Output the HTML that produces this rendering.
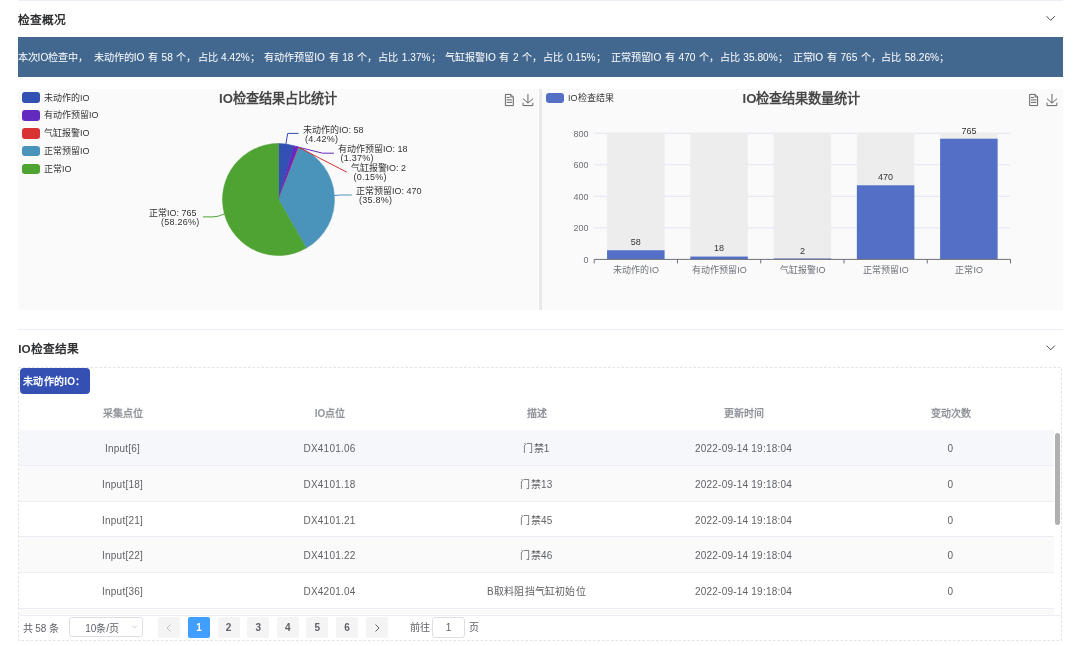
<!DOCTYPE html>
<html lang="zh-CN"><head><meta charset="utf-8">
<style>
*{margin:0;padding:0;box-sizing:border-box}
html,body{width:1080px;height:646px;overflow:hidden;background:#fff;font-family:"Liberation Sans",sans-serif;color:#303133}
.a{position:absolute;white-space:nowrap}
.hline{position:absolute;height:1px;background:#ebeef5}
.title{position:absolute;font-size:11.7px;font-weight:bold;color:#303133;line-height:14px;white-space:nowrap}
.chev{position:absolute;width:7px;height:7px;border-right:1px solid #555;border-bottom:1px solid #555;transform:rotate(45deg)}
.banner{position:absolute;left:18px;top:37px;width:1045px;height:40px;background:#436890}
.bt{position:absolute;top:1.2px;color:#fff;font-size:10.15px;word-spacing:0.8px;text-spacing-trim:space-all;line-height:40px;white-space:nowrap}
.panel{position:absolute;top:89px;height:221px;background:#fafafa}
.lg{position:absolute;width:18px;height:10.5px;border-radius:3px}
.lt{position:absolute;font-size:9px;color:#333;line-height:10px;white-space:nowrap}
.ct{position:absolute;font-size:13.2px;font-weight:bold;color:#464646;white-space:nowrap;line-height:16px}
.pl{position:absolute;font-size:9px;color:#333;line-height:9px;white-space:nowrap}
.yl{position:absolute;font-size:9px;color:#6e7079;line-height:10px;text-align:right;width:30px}
.xl{position:absolute;font-size:9px;color:#6e7079;line-height:10px;text-align:center;width:84px;white-space:nowrap}
.bl{position:absolute;font-size:9px;color:#333;line-height:10px;text-align:center;width:58px}
.th{position:absolute;top:405.5px;height:16px;line-height:16px;font-size:10px;color:#909399;text-align:center;width:207px;font-weight:bold;white-space:nowrap}
.row{position:absolute;left:0;width:1035px;height:35.68px;border-bottom:1px solid #ebeef5}
.td{position:absolute;top:1px;letter-spacing:0.22px;height:35px;line-height:35px;font-size:10px;color:#606266;text-align:center;width:207px;white-space:nowrap}
.pb{position:absolute;top:617.3px;width:22px;height:20.3px;background:#f4f4f5;border-radius:2px;font-size:10px;font-weight:bold;color:#606266;text-align:center;line-height:21.5px}
</style></head><body><div style="position:absolute;left:0;top:0;width:1080px;height:646px;will-change:transform">
<div class="hline" style="left:18px;top:0;width:1045px"></div>
<div class="title" style="left:18.2px;top:12.8px">检查概况</div>
<svg class="a" style="left:1040px;top:10px" width="20" height="16"><path d="M6.5,6.2 L10.7,10.4 L14.9,6.2" fill="none" stroke="#4a4a4a" stroke-width="1"/></svg>
<div class="banner"><span class="bt" style="left:-0.4px">本次IO检查中，</span><span class="bt" style="left:75.7px">未动作的IO 有 58 个，</span><span class="bt" style="left:179.5px">占比 4.42%；</span><span class="bt" style="left:246.3px">有动作预留IO 有 18 个，</span><span class="bt" style="left:360.2px">占比 1.37%；</span><span class="bt" style="left:427.2px">气缸报警IO 有 2 个，</span><span class="bt" style="left:525.3px">占比 0.15%；</span><span class="bt" style="left:592.6px">正常预留IO 有 470 个，</span><span class="bt" style="left:701.7px">占比 35.80%；</span><span class="bt" style="left:774.5px">正常IO 有 765 个，</span><span class="bt" style="left:863.1px">占比 58.26%；</span></div>

<div class="panel" style="left:18px;width:520px"></div>
<div class="a" style="left:538.5px;top:89px;width:3.5px;height:221px;background:#e8e8e8"></div>
<div class="panel" style="left:542px;width:521px"></div>

<div class="lg" style="left:22px;top:92.4px;background:#3350b3"></div><div class="lt" style="left:44px;top:92.5px">未动作的IO</div>
<div class="lg" style="left:22px;top:110.2px;background:#6429be"></div><div class="lt" style="left:44px;top:110.3px">有动作预留IO</div>
<div class="lg" style="left:22px;top:128px;background:#d83232"></div><div class="lt" style="left:44px;top:128.1px">气缸报警IO</div>
<div class="lg" style="left:22px;top:145.8px;background:#4a93bb"></div><div class="lt" style="left:44px;top:145.9px">正常预留IO</div>
<div class="lg" style="left:22px;top:163.6px;background:#4ea332"></div><div class="lt" style="left:44px;top:163.7px">正常IO</div>

<div class="ct" style="left:219px;top:91px">IO检查结果占比统计</div>
<div class="ct" style="left:742.5px;top:91px">IO检查结果数量统计</div>

<div class="lg" style="left:546px;top:92.5px;background:#5470c6"></div><div class="lt" style="left:568px;top:92.7px">IO检查结果</div>

<svg class="a" style="left:0;top:0" width="1080" height="646">
<path d="M278.5,199.5 L278.50,143.50 A56,56 0 0 1 293.84,145.64 Z" fill="#3350b3" stroke="#3350b3" stroke-width="0.5" stroke-linejoin="round"/>
<path d="M278.5,199.5 L293.84,145.64 A56,56 0 0 1 298.42,147.16 Z" fill="#6429be" stroke="#6429be" stroke-width="0.5" stroke-linejoin="round"/>
<path d="M278.5,199.5 L298.42,147.16 A56,56 0 0 1 298.92,147.36 Z" fill="#d83232" stroke="#d83232" stroke-width="0.5" stroke-linejoin="round"/>
<path d="M278.5,199.5 L298.92,147.36 A56,56 0 0 1 306.29,248.12 Z" fill="#4a93bb" stroke="#4a93bb" stroke-width="0.5" stroke-linejoin="round"/>
<path d="M278.5,199.5 L306.29,248.12 A56,56 0 1 1 278.50,143.50 Z" fill="#4ea332" stroke="#4ea332" stroke-width="0.5" stroke-linejoin="round"/>
<path d="M285.9,144.2 L287.7,133.4 L298.6,133.4" fill="none" stroke="#3350b3" stroke-width="1"/>
<path d="M296.1,146.6 L322.7,153.2 L333.9,153.2" fill="none" stroke="#6429be" stroke-width="1"/>
<path d="M298.7,147.4 L346.9,172.2" fill="none" stroke="#d83232" stroke-width="1"/>
<path d="M334.3,195.6 L340.7,195 L351.8,195" fill="none" stroke="#4a93bb" stroke-width="1"/>
<path d="M224.4,213.9 Q218,216.9 213,216.9 L203,216.9" fill="none" stroke="#4ea332" stroke-width="1"/>
<line x1="594.2" x2="1010.5" y1="227.85" y2="227.85" stroke="#e0e6f1" stroke-width="1"/>
<line x1="594.2" x2="1010.5" y1="196.30" y2="196.30" stroke="#e0e6f1" stroke-width="1"/>
<line x1="594.2" x2="1010.5" y1="164.75" y2="164.75" stroke="#e0e6f1" stroke-width="1"/>
<line x1="594.2" x2="1010.5" y1="133.20" y2="133.20" stroke="#e0e6f1" stroke-width="1"/>
<rect x="607.08" y="133.20" width="57.5" height="126.20" fill="#ededed"/>
<rect x="607.08" y="250.25" width="57.5" height="9.15" fill="#5470c6"/>
<rect x="690.34" y="133.20" width="57.5" height="126.20" fill="#ededed"/>
<rect x="690.34" y="256.56" width="57.5" height="2.84" fill="#5470c6"/>
<rect x="773.60" y="133.20" width="57.5" height="126.20" fill="#ededed"/>
<rect x="773.60" y="258.50" width="57.5" height="0.90" fill="#5470c6"/>
<rect x="856.86" y="133.20" width="57.5" height="126.20" fill="#ededed"/>
<rect x="856.86" y="185.26" width="57.5" height="74.14" fill="#5470c6"/>
<rect x="940.12" y="133.20" width="57.5" height="126.20" fill="#ededed"/>
<rect x="940.12" y="138.72" width="57.5" height="120.68" fill="#5470c6"/>
<line x1="594.2" x2="1010.5" y1="259.4" y2="259.4" stroke="#6e7079" stroke-width="1"/>
<line x1="594.20" x2="594.20" y1="259.4" y2="263.4" stroke="#6e7079" stroke-width="1"/>
<line x1="677.46" x2="677.46" y1="259.4" y2="263.4" stroke="#6e7079" stroke-width="1"/>
<line x1="760.72" x2="760.72" y1="259.4" y2="263.4" stroke="#6e7079" stroke-width="1"/>
<line x1="843.98" x2="843.98" y1="259.4" y2="263.4" stroke="#6e7079" stroke-width="1"/>
<line x1="927.24" x2="927.24" y1="259.4" y2="263.4" stroke="#6e7079" stroke-width="1"/>
<line x1="1010.50" x2="1010.50" y1="259.4" y2="263.4" stroke="#6e7079" stroke-width="1"/>
<g transform="translate(503.1,94) scale(0.2)"><path d="M17.5,17.3H33 M45.4,29.5h-28 M11.5,2v56H51V14.8L38.4,2H11.5z M38.4,2.2v12.7H51 M45.4,41.7h-28" fill="none" stroke="#666" stroke-width="5"/></g>
<g transform="translate(522.1,94) scale(0.2)"><path d="M4.7,22.9L29.3,45.5L54.7,23.4M4.6,43.6L4.6,58L53.8,58L53.8,43.6M29.2,45.1L29.2,0" fill="none" stroke="#666" stroke-width="5"/></g>
<g transform="translate(1027.4,94) scale(0.2)"><path d="M17.5,17.3H33 M45.4,29.5h-28 M11.5,2v56H51V14.8L38.4,2H11.5z M38.4,2.2v12.7H51 M45.4,41.7h-28" fill="none" stroke="#666" stroke-width="5"/></g>
<g transform="translate(1046.1,94) scale(0.2)"><path d="M4.7,22.9L29.3,45.5L54.7,23.4M4.6,43.6L4.6,58L53.8,58L53.8,43.6M29.2,45.1L29.2,0" fill="none" stroke="#666" stroke-width="5"/></g>
</svg>

<div class="pl" style="left:303px;top:125.7px">未动作的IO: 58</div>
<div class="pl" style="left:305.1px;top:134.5px;letter-spacing:0.25px">(4.42%)</div>
<div class="pl" style="left:338px;top:144.8px">有动作预留IO: 18</div>
<div class="pl" style="left:340.6px;top:153.8px;letter-spacing:0.25px">(1.37%)</div>
<div class="pl" style="left:350.5px;top:164px">气缸报警IO: 2</div>
<div class="pl" style="left:353.6px;top:173.0px;letter-spacing:0.25px">(0.15%)</div>
<div class="pl" style="left:356px;top:186.5px">正常预留IO: 470</div>
<div class="pl" style="left:359.1px;top:195.8px;letter-spacing:0.25px">(35.8%)</div>
<div class="pl" style="left:149px;top:208.5px">正常IO: 765</div>
<div class="pl" style="left:161.1px;top:217.5px;letter-spacing:0.25px">(58.26%)</div>

<div class="yl" style="left:558.5px;top:128.5px">800</div>
<div class="yl" style="left:558.5px;top:160px">600</div>
<div class="yl" style="left:558.5px;top:191.5px">400</div>
<div class="yl" style="left:558.5px;top:223px">200</div>
<div class="yl" style="left:558.5px;top:254.5px">0</div>

<div class="xl" style="left:594.2px;top:265px">未动作的IO</div>
<div class="xl" style="left:677.5px;top:265px">有动作预留IO</div>
<div class="xl" style="left:760.7px;top:265px">气缸报警IO</div>
<div class="xl" style="left:844px;top:265px">正常预留IO</div>
<div class="xl" style="left:927.2px;top:265px">正常IO</div>

<div class="bl" style="left:606.8px;top:236.5px">58</div>
<div class="bl" style="left:690px;top:243px">18</div>
<div class="bl" style="left:773.4px;top:245.5px">2</div>
<div class="bl" style="left:856.6px;top:172px">470</div>
<div class="bl" style="left:940px;top:125.5px">765</div>

<div class="hline" style="left:18px;top:329px;width:1045px"></div>
<div class="title" style="left:18.2px;top:341.6px"><b>IO</b>检查结果</div>
<svg class="a" style="left:1040px;top:340px" width="20" height="16"><path d="M6.5,5.6 L10.7,9.8 L14.9,5.6" fill="none" stroke="#4a4a4a" stroke-width="1"/></svg>

<svg class="a" style="left:0;top:0" width="1080" height="646"><rect x="18.5" y="367.5" width="1043" height="273" fill="none" stroke="#e2e2e2" stroke-width="1" stroke-dasharray="2.5 2"/></svg>
<div class="a" style="left:20px;top:368px;width:70px;height:26px;background:#3450b3;border-radius:4px;color:#fff;font-size:10px;font-weight:bold;line-height:27px;padding-left:3px;letter-spacing:0.3px">未动作的IO：</div>

<div class="th" style="left:19.5px">采集点位</div>
<div class="th" style="left:226.5px">IO点位</div>
<div class="th" style="left:433.5px">描述</div>
<div class="th" style="left:640.5px">更新时间</div>
<div class="th" style="left:847.5px">变动次数</div>
<div class="a" style="left:19px;top:430.4px;width:1035px;height:184.6px;overflow:hidden">
<div class="row" style="top:0.0px;background:#f5f7fa"><div class="td" style="left:0.0px">Input[6]</div><div class="td" style="left:207.0px">DX4101.06</div><div class="td" style="left:414.0px">门禁1</div><div class="td" style="left:621.0px">2022-09-14 19:18:04</div><div class="td" style="left:828.0px">0</div></div>
<div class="row" style="top:35.7px;background:#fafafa"><div class="td" style="left:0.0px">Input[18]</div><div class="td" style="left:207.0px">DX4101.18</div><div class="td" style="left:414.0px">门禁13</div><div class="td" style="left:621.0px">2022-09-14 19:18:04</div><div class="td" style="left:828.0px">0</div></div>
<div class="row" style="top:71.4px;background:#fff"><div class="td" style="left:0.0px">Input[21]</div><div class="td" style="left:207.0px">DX4101.21</div><div class="td" style="left:414.0px">门禁45</div><div class="td" style="left:621.0px">2022-09-14 19:18:04</div><div class="td" style="left:828.0px">0</div></div>
<div class="row" style="top:107.0px;background:#fafafa"><div class="td" style="left:0.0px">Input[22]</div><div class="td" style="left:207.0px">DX4101.22</div><div class="td" style="left:414.0px">门禁46</div><div class="td" style="left:621.0px">2022-09-14 19:18:04</div><div class="td" style="left:828.0px">0</div></div>
<div class="row" style="top:142.7px;background:#fff"><div class="td" style="left:0.0px">Input[36]</div><div class="td" style="left:207.0px">DX4201.04</div><div class="td" style="left:414.0px">B取料阻挡气缸初始位</div><div class="td" style="left:621.0px">2022-09-14 19:18:04</div><div class="td" style="left:828.0px">0</div></div>
<div class="row" style="top:178.4px;background:#fafafa"><div class="td" style="left:0.0px">Input[37]</div><div class="td" style="left:207.0px">DX4201.05</div><div class="td" style="left:414.0px">B取料阻挡气缸</div><div class="td" style="left:621.0px">2022-09-14 19:18:04</div><div class="td" style="left:828.0px">0</div></div>
</div>
<div class="a" style="left:1055px;top:433px;width:5px;height:92px;background:#b0b0b0;border-radius:3px"></div>
<div class="a" style="left:19px;top:615px;width:1043px;height:1px;background:#ebeef5"></div>
<div class="a" style="left:23px;top:621.8px;font-size:10px;word-spacing:-0.5px;color:#606266;line-height:14px">共 58 条</div>
<div class="a" style="left:69.4px;top:617.3px;width:74px;height:20.1px;border:1px solid #dcdfe6;border-radius:3px;font-size:10px;color:#606266;line-height:21px;padding-left:14.8px">10条/页</div>
<svg class="a" style="left:128px;top:620px" width="12" height="12"><path d="M4.3,5.6 L6.6,7.9 L8.9,5.6" fill="none" stroke="#c0c4cc" stroke-width="0.9"/></svg>
<div class="pb" style="left:158.4px"><svg width="22" height="20" style="position:absolute;left:0;top:0.3px"><path d="M12.5,6.5 L9,10 L12.5,13.5" fill="none" stroke="#c0c4cc" stroke-width="1"/></svg></div>
<div class="pb" style="left:188px;background:#409eff;color:#fff">1</div>
<div class="pb" style="left:217.6px">2</div>
<div class="pb" style="left:247.2px">3</div>
<div class="pb" style="left:276.8px">4</div>
<div class="pb" style="left:306.4px">5</div>
<div class="pb" style="left:336px">6</div>
<div class="pb" style="left:365.6px"><svg width="22" height="20" style="position:absolute;left:0;top:0.3px"><path d="M9.5,6.5 L13,10 L9.5,13.5" fill="none" stroke="#606266" stroke-width="1"/></svg></div>
<div class="a" style="left:409.7px;top:621px;font-size:10px;color:#606266;line-height:14px">前往</div>
<div class="a" style="left:431.9px;top:617.2px;width:33.2px;height:20.5px;border:1px solid #dcdfe6;border-radius:3px;font-size:10px;color:#606266;line-height:19.5px;text-align:center">1</div>
<div class="a" style="left:468.7px;top:621px;font-size:10px;color:#606266;line-height:14px">页</div>


</div></body></html>
